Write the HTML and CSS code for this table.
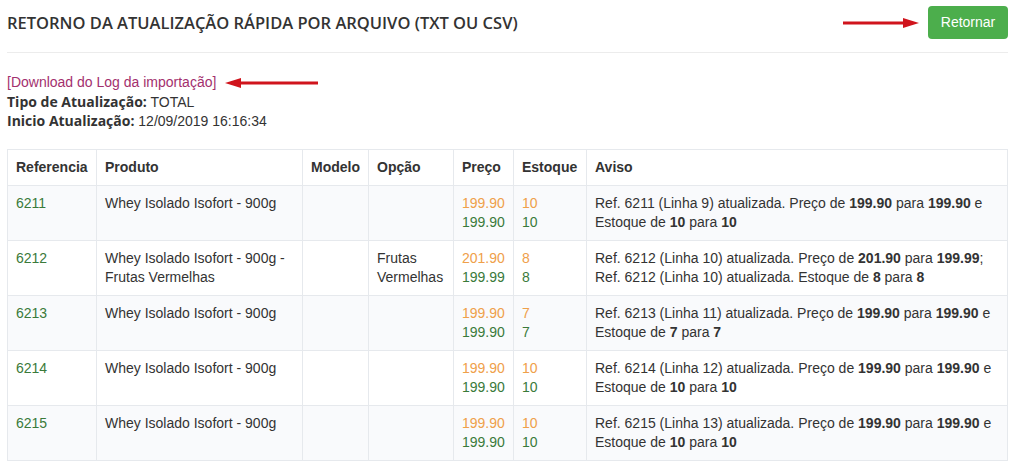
FILE: index.html
```html
<!DOCTYPE html>
<html lang="pt">
<head>
<meta charset="utf-8">
<title>Retorno da atualização</title>
<link rel="stylesheet" href="styles.css">
</head>
<body>
<div class="page">
  <header class="top">
    <h1 class="title">RETORNO DA ATUALIZAÇÃO RÁPIDA POR ARQUIVO (TXT OU CSV)</h1>
    <div class="actions">
      <svg class="arrow arrow-right" width="76" height="12" viewBox="0 0 76 12"><line x1="0" y1="6" x2="62" y2="6" stroke="#d0141c" stroke-width="3"/><polygon points="60,1 76,6 60,11" fill="#d0141c"/></svg>
      <a class="btn" href="#">Retornar</a>
    </div>
  </header>
  <section class="info">
    <div class="link-row">
      <a class="log-link" href="#">[Download do Log da importação]</a>
      <svg class="arrow arrow-left" width="94" height="12" viewBox="0 0 94 12"><polygon points="0,6 16,1 16,11" fill="#d0141c"/><line x1="14" y1="6" x2="93" y2="6" stroke="#d0141c" stroke-width="3"/></svg>
    </div>
    <div class="meta"><b>Tipo de Atualização:</b> TOTAL</div>
    <div class="meta"><b>Inicio Atualização:</b> 12/09/2019 16:16:34</div>
  </section>
  <table class="grid">
    <colgroup>
      <col class="c-ref"><col class="c-prod"><col class="c-mod"><col class="c-opc"><col class="c-preco"><col class="c-est"><col class="c-aviso">
    </colgroup>
    <thead>
      <tr><th>Referencia</th><th>Produto</th><th>Modelo</th><th>Opção</th><th>Preço</th><th>Estoque</th><th>Aviso</th></tr>
    </thead>
    <tbody>
      <tr>
        <td class="ref">6211</td><td>Whey Isolado Isofort - 900g</td><td></td><td></td>
        <td><span class="old">199.90</span><br><span class="new">199.90</span></td>
        <td><span class="old">10</span><br><span class="new">10</span></td>
        <td>Ref. 6211 (Linha 9) atualizada. Preço de <b>199.90</b> para <b>199.90</b> e Estoque de <b>10</b> para <b>10</b></td>
      </tr>
      <tr>
        <td class="ref">6212</td><td>Whey Isolado Isofort - 900g - Frutas Vermelhas</td><td></td><td>Frutas Vermelhas</td>
        <td><span class="old">201.90</span><br><span class="new">199.99</span></td>
        <td><span class="old">8</span><br><span class="new">8</span></td>
        <td>Ref. 6212 (Linha 10) atualizada. Preço de <b>201.90</b> para <b>199.99</b>;<br>Ref. 6212 (Linha 10) atualizada. Estoque de <b>8</b> para <b>8</b></td>
      </tr>
      <tr>
        <td class="ref">6213</td><td>Whey Isolado Isofort - 900g</td><td></td><td></td>
        <td><span class="old">199.90</span><br><span class="new">199.90</span></td>
        <td><span class="old">7</span><br><span class="new">7</span></td>
        <td>Ref. 6213 (Linha 11) atualizada. Preço de <b>199.90</b> para <b>199.90</b> e Estoque de <b>7</b> para <b>7</b></td>
      </tr>
      <tr>
        <td class="ref">6214</td><td>Whey Isolado Isofort - 900g</td><td></td><td></td>
        <td><span class="old">199.90</span><br><span class="new">199.90</span></td>
        <td><span class="old">10</span><br><span class="new">10</span></td>
        <td>Ref. 6214 (Linha 12) atualizada. Preço de <b>199.90</b> para <b>199.90</b> e Estoque de <b>10</b> para <b>10</b></td>
      </tr>
      <tr>
        <td class="ref">6215</td><td>Whey Isolado Isofort - 900g</td><td></td><td></td>
        <td><span class="old">199.90</span><br><span class="new">199.90</span></td>
        <td><span class="old">10</span><br><span class="new">10</span></td>
        <td>Ref. 6215 (Linha 13) atualizada. Preço de <b>199.90</b> para <b>199.90</b> e Estoque de <b>10</b> para <b>10</b></td>
      </tr>
    </tbody>
  </table>
</div>
</body>
</html>
```

FILE: styles.css
```css
* { box-sizing: border-box; }
html, body { margin: 0; padding: 0; background: #fff; }
body {
  font-family: "Liberation Sans", Arial, sans-serif;
  font-size: 14px;
  line-height: 19px;
  color: #333;
}
.page { padding: 0 9px 0 7px; }
.top {
  display: flex;
  align-items: center;
  justify-content: space-between;
  height: 53px;
  padding-bottom: 7px;
  border-bottom: 1px solid #ececec;
}
.title {
  margin: 0;
  font-family: "Open Sans", sans-serif;
  font-weight: 600;
  font-size: 16.5px;
  line-height: 22px;
  color: #333;
}
.actions { display: flex; align-items: center; gap: 9px; }
.arrow { display: block; }
.btn {
  display: inline-block;
  background: #4cae4c;
  color: #fff;
  text-decoration: none;
  font-size: 14px;
  line-height: 20px;
  padding: 6px 12px 7px;
  border-radius: 4px;
  width: 80px;
  text-align: center;
}
.info { padding-top: 19px; }
.link-row { display: flex; align-items: center; gap: 9px; height: 21px; }
.log-link { color: #a3306e; text-decoration: none; font-size: 14px; }
.meta { font-size: 14px; line-height: 19px; height: 19px; }
.meta b { font-family: "Open Sans", sans-serif; font-weight: 700; line-height: 1; }
.grid {
  margin-top: 18px;
  width: 100%;
  border-collapse: collapse;
  table-layout: fixed;
  border: 1px solid #e6e9ed;
}
.c-ref { width: 89px; }
.c-prod { width: 206px; }
.c-mod { width: 66px; }
.c-opc { width: 85px; }
.c-preco { width: 60px; }
.c-est { width: 73px; }
.grid th, .grid td {
  border: 1px solid #e6e9ed;
  padding: 8px 8px;
  text-align: left;
  vertical-align: top;
  line-height: 19px;
}
.grid th { font-weight: 700; }
.grid tbody tr:nth-child(odd) { background: #f9fafc; }
.ref { color: #3a7a3a; }
.old { color: #efa04a; }
.new { color: #3a7a3a; }
```
